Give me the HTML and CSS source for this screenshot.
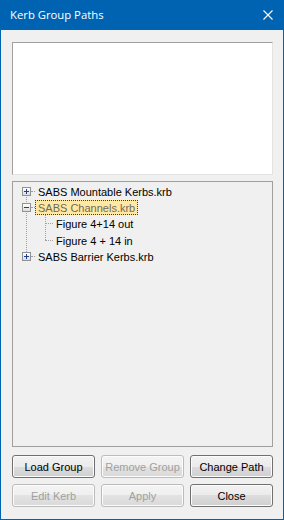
FILE: index.html
```html
<!DOCTYPE html>
<html lang="en">

<head>
    <meta charset="UTF-8">
    <meta name="viewport" content="width=device-width, initial-scale=1.0">
    <title>Kerb Group Paths</title>
    <link rel="stylesheet" href="styles.css">
</head>

<body>
    <div class="window">
        <div class="titlebar">
            <span class="title">Kerb Group Paths</span>
            <svg class="close" width="10" height="10" viewBox="0 0 10 10">
                <path d="M0.5 0.5 L9.5 9.5 M9.5 0.5 L0.5 9.5" stroke="#ffffff" stroke-width="1.1" fill="none" />
            </svg>
        </div>

        <div class="content">
            <div class="textbox"></div>

            <div class="tree">
                <div class="roots">
                    <div class="row">
                        <span class="exp plus"></span><span class="hline"></span>
                        <span class="label">SABS Mountable Kerbs.krb</span>
                    </div>
                    <div class="row">
                        <span class="exp"></span><span class="hline"></span>
                        <span class="label selected">SABS Channels.krb</span>
                    </div>
                    <div class="kids">
                        <div class="row child tall">
                            <span class="cline"></span>
                            <span class="label">Figure 4+14 out</span>
                        </div>
                        <div class="row child">
                            <span class="cline"></span>
                            <span class="label">Figure 4 + 14 in</span>
                        </div>
                    </div>
                    <div class="row">
                        <span class="exp plus"></span><span class="hline"></span>
                        <span class="label">SABS Barrier Kerbs.krb</span>
                    </div>
                </div>
            </div>

            <div class="buttons">
                <button class="btn">Load Group</button>
                <button class="btn" disabled>Remove Group</button>
                <button class="btn">Change Path</button>
                <button class="btn" disabled>Edit Kerb</button>
                <button class="btn" disabled>Apply</button>
                <button class="btn">Close</button>
            </div>
        </div>
    </div>
</body>

</html>
```

FILE: styles.css
```css
* {
    padding: 0;
    margin: 0;
    box-sizing: border-box;
}

body {
    background-color: #ffffff;
    font-family: "Liberation Sans", Arial, sans-serif;
    font-size: 11px;
    color: #000000;
}

.window {
    width: 284px;
    height: 520px;
    display: flex;
    flex-direction: column;
    background-color: #f0f0f0;
    border: 1px solid #0063b1;
    border-top: none;
}

.titlebar {
    height: 30px;
    flex: none;
    margin: 0 -1px;
    background-color: #0063b1;
    display: flex;
    align-items: center;
    justify-content: space-between;
    padding: 0 11px 0 10px;
}

.title {
    font-family: "Open Sans", "Noto Sans", sans-serif;
    font-size: 11.3px;
    color: #ffffff;
    padding-bottom: 1px;
}

.close {
    display: block;
}

.content {
    flex: 1;
    display: flex;
    flex-direction: column;
    padding: 12px 10px 12px 11px;
}

.textbox {
    height: 133px;
    flex: none;
    background-color: #ffffff;
    border: 1px solid;
    border-color: #a0a0a0 #e3e3e3 #e3e3e3 #a0a0a0;
}

.tree {
    flex: 1;
    margin-top: 6px;
    border: 1px solid #a0a0a0;
    background-color: #f0f0f0;
    padding: 1px 0 0 9px;
}

/* dotted connector joining the root nodes */
.roots {
    position: relative;
}

.roots:before {
    content: "";
    position: absolute;
    left: 4px;
    top: 8px;
    bottom: 8px;
    border-left: 1px dotted #a0a0a0;
}

.row {
    height: 16px;
    display: flex;
    align-items: center;
    position: relative;
    white-space: nowrap;
}

.row.tall {
    height: 17px;
}

.exp {
    width: 9px;
    height: 9px;
    flex: none;
    position: relative;
    z-index: 1;
    border: 1px solid #919191;
    background: linear-gradient(#ffffff, #dcdcdc);
}

.exp:before {
    content: "";
    position: absolute;
    left: 1px;
    top: 3px;
    width: 5px;
    height: 1px;
    background-color: #1f3f8f;
}

.exp.plus:after {
    content: "";
    position: absolute;
    left: 3px;
    top: 1px;
    width: 1px;
    height: 5px;
    background-color: #1f3f8f;
}

.hline {
    width: 4px;
    flex: none;
    border-top: 1px dotted #a0a0a0;
}

.label {
    padding: 0 2px;
    height: 15px;
    line-height: 14px;
    border: 1px solid transparent;
}

.label.selected {
    background-color: #ffe8a3;
    border: 1px dotted #3c3c3c;
    color: #6e6a5a;
}

/* dotted connector for the children of an open node */
.kids {
    position: relative;
}

.kids:before {
    content: "";
    position: absolute;
    left: 23px;
    top: 0;
    height: 25px;
    border-left: 1px dotted #a0a0a0;
}

.row.child {
    padding-left: 23px;
}

.cline {
    width: 8px;
    flex: none;
    border-top: 1px dotted #a0a0a0;
}

.buttons {
    flex: none;
    margin-top: 8px;
    display: grid;
    grid-template-columns: 83px 83px 83px;
    justify-content: space-between;
    row-gap: 6px;
}

.btn {
    height: 23px;
    font-family: "Liberation Sans", Arial, sans-serif;
    font-size: 11px;
    color: #000000;
    border: 1px solid #707070;
    border-radius: 3px;
    background: linear-gradient(#f2f2f2 0%, #ebebeb 50%, #dddddd 50%, #cfcfcf 100%);
    box-shadow: inset 0 0 0 1px #fcfcfc;
}

.btn:disabled {
    color: #a0a0a0;
    border-color: #bcbcbc;
    background: linear-gradient(#f4f4f4 0%, #efefef 50%, #e3e3e3 50%, #d9d9d9 100%);
}
```
